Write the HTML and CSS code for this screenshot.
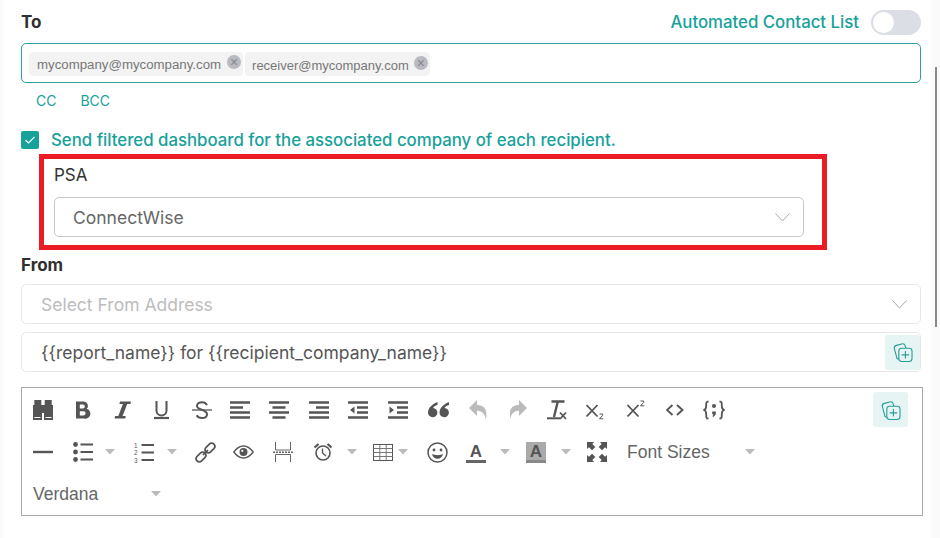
FILE: index.html
```html
<!DOCTYPE html>
<html lang="en">
<head>
<meta charset="utf-8">
<title>Report recipients</title>
<link rel="stylesheet" href="styles.css">
</head>
<body>
<svg class="defs" width="0" height="0" aria-hidden="true">
  <symbol id="copy-plus" viewBox="0 0 20 20">
    <path d="M6.200 16.600 4.600 16 2.200 7.200A2.600 2.600 0 0 1 4 4L8.800 2.700A2.600 2.600 0 0 1 12 4.400L12.600 6.500" fill="none" stroke="currentColor" stroke-width="1"/>
    <rect x="6.200" y="6.600" width="12" height="12" rx="2.600" fill="none" stroke="currentColor" stroke-width="1"/>
    <path d="M12.200 9.200v6.800M8.800 12.600h6.800" fill="none" stroke="currentColor" stroke-width="1"/>
  </symbol>
  <symbol id="caret" viewBox="0 0 10 6"><path d="M0 0h10L5 5.500z" fill="currentColor"/></symbol>
  <symbol id="chevron" viewBox="0 0 15 9"><path d="M.5.500 7.500 8 14.500.500" fill="none" stroke="currentColor" stroke-width="1"/></symbol>
</svg>
<main class="panel">
  <div class="to-head">
    <span class="label-strong">To</span>
    <div class="auto-list"><span>Automated Contact List</span><span class="toggle"><span class="knob"></span></span></div>
  </div>
  <div class="to-box">
    <span class="chip"><span>mycompany@mycompany.com</span><span class="chip-x">×</span></span>
    <span class="chip chip-low"><span>receiver@mycompany.com</span><span class="chip-x">×</span></span>
  </div>
  <div class="cc-row"><span>CC</span><span>BCC</span></div>
  <div class="check-row">
    <span class="checkbox"><svg width="12" height="10" viewBox="0 0 12 10"><path d="M1.500 5.200 4.600 8 10.500 1.800" fill="none" stroke="#fff" stroke-width="1.200"/></svg></span>
    <span>Send filtered dashboard for the associated company of each recipient.</span>
  </div>
  <section class="psa">
    <div class="psa-label">PSA</div>
    <div class="select select-psa"><span>ConnectWise</span><svg class="chev" width="15" height="9"><use href="#chevron"/></svg></div>
  </section>
  <div class="label-strong from-label">From</div>
  <div class="select select-from"><span>Select From Address</span><svg class="chev" width="15" height="9"><use href="#chevron"/></svg></div>
  <div class="subject"><span>{{report_name}} for {{recipient_company_name}}</span><span class="copy-btn"><svg width="22" height="22"><use href="#copy-plus"/></svg></span></div>
  <div class="editor">
    <div class="tb-row tb-first">
      <span class="tb"><svg width="20" height="20" viewBox="0 0 20 20"><path d="M1.300 0h7v5h-7zM11.700 0h7v5h-7zM0 5h9v15H0zM11 5h9v15h-9zM9 5h2v8H9z" fill="#555"/><path d="M1.500 17.500h6M12.500 17.500h6" stroke="#fff" stroke-width="1.200"/></svg></span>
      <span class="tb s1"><svg width="20" height="20" viewBox="0 0 20 20"><path d="M3 1.500h7.500a4.300 4.300 0 0 1 3.200 7.300 4.700 4.700 0 0 1-2.700 9.700H3zM6.800 4.500v4h3a2 2 0 0 0 0-4zM6.800 11.200v4.300h3.700a2.150 2.150 0 0 0 0-4.300z" fill="#555" fill-rule="evenodd"/></svg></span>
      <span class="tb s2"><svg width="20" height="20" viewBox="0 0 20 20"><path d="M6 1.500h11L16.400 4h-3.200L8.600 16h3.200l-.6 2.500H.5l.6-2.500h3.200L8.900 4H5.400z" fill="#555"/></svg></span>
      <span class="tb s3"><svg width="20" height="20" viewBox="0 0 20 20"><path d="M2.500 1v9.500a5 5 0 0 0 10 0V1" fill="none" stroke="#555" stroke-width="2"/><path d="M0 18h15" stroke="#555" stroke-width="2.200"/></svg></span>
      <span class="tb s1"><svg width="20" height="20" viewBox="0 0 20 20"><path d="M15 5C14 3 12 2.200 10 2.200 7.500 2.200 5 3.500 5 6c0 4.200 10 3.400 10 8.200 0 2.500-2.400 3.800-5 3.800-2.200 0-4.300-.8-5.400-2.800" fill="none" stroke="#555" stroke-width="2"/><path d="M0 10h20" stroke="#555" stroke-width="1.300"/></svg></span>
      <span class="tb"><svg width="20" height="20" viewBox="0 0 20 20"><path d="M0 2.500h20M0 7.500h13M0 12.500h20M0 17.500h20" stroke="#555" stroke-width="2.400"/></svg></span>
      <span class="tb"><svg width="20" height="20" viewBox="0 0 20 20"><path d="M0 2.500h20M3.500 7.500h13M0 12.500h20M3.500 17.500h13" stroke="#555" stroke-width="2.400"/></svg></span>
      <span class="tb"><svg width="20" height="20" viewBox="0 0 20 20"><path d="M0 2.500h20M7 7.500h13M0 12.500h20M0 17.500h20" stroke="#555" stroke-width="2.400"/></svg></span>
      <span class="tb"><svg width="20" height="20" viewBox="0 0 20 20"><path d="M0 2.500h20M9 7.500h11M9 12.500h11M0 17.500h20" stroke="#555" stroke-width="2.400"/><path d="M6.500 6.500v7L2 10z" fill="#555"/></svg></span>
      <span class="tb"><svg width="20" height="20" viewBox="0 0 20 20"><path d="M0 2.500h20M9 7.500h11M9 12.500h11M0 17.500h20" stroke="#555" stroke-width="2.400"/><path d="M1.500 6.500v7L6 10z" fill="#555"/></svg></span>
      <span class="tb s1"><svg width="21" height="20" viewBox="0 0 21 20"><path d="M9.500 2C4.500 4 0 7.500 0 12.500a4.700 4.700 0 1 0 5-4.600C5.900 6.500 7.500 5.500 9.500 5zM21 2c-5 2-9.500 5.500-9.500 10.500a4.700 4.700 0 1 0 5-4.600c.9-1.400 2.500-2.400 4.500-2.900z" fill="#555"/></svg></span>
      <span class="tb s3"><svg width="20" height="20" viewBox="0 0 20 20"><path d="M0 8 8 0v5c6 0 11 3 9 14.500C15.500 13 12.500 10.800 8 10.800V16z" fill="#bbb"/></svg></span>
      <span class="tb s4"><svg width="20" height="20" viewBox="0 0 20 20"><path d="M17 8 9 0v5C3 5-2 8 0 19.500 1.500 13 4.500 10.800 9 10.800V16z" fill="#bbb"/></svg></span>
      <span class="tb s2"><svg width="20" height="20" viewBox="0 0 20 20"><path d="M4.500 1.500h13M10.800 1.500 7 17" stroke="#555" stroke-width="2.400" fill="none"/><path d="M0 18.300h13" stroke="#555" stroke-width="2"/><path d="m13 12.500 6 6.500M19 12.500 13 19" stroke="#555" stroke-width="1.800"/></svg></span>
      <span class="tb s2"><svg width="20" height="20" viewBox="0 0 20 20"><path d="m.5 5 11 11.500M11.500 5 .5 16.500" stroke="#555" stroke-width="1.800"/><path d="M13.500 14h3.200l-.1 1.500-3.100 3.300h3.800" fill="none" stroke="#555" stroke-width="1"/></svg></span>
      <span class="tb s3"><svg width="20" height="20" viewBox="0 0 20 20"><path d="m.5 5 11 11.500M11.500 5 .5 16.500" stroke="#555" stroke-width="1.800"/><path d="M13.500 1h3.200l-.1 1.500-3.100 3.300h3.800" fill="none" stroke="#555" stroke-width="1"/></svg></span>
      <span class="tb s3"><svg width="20" height="20" viewBox="0 0 20 20"><path d="M6.500 5 1 10l5.500 5M11 5l5.500 5-5.500 5" fill="none" stroke="#555" stroke-width="1.900"/></svg></span>
      <span class="tb"><svg width="22" height="20" viewBox="0 0 22 20"><path d="M5.500 1.500C3 1.500 3.200 3 3.200 6c0 2.500-.7 3.500-2.200 4 1.500.5 2.200 1.500 2.200 4 0 3-.2 4.500 2.300 4.500M16.500 1.500c2.500 0 2.300 1.500 2.300 4.500 0 2.500.7 3.500 2.200 4-1.500.5-2.200 1.500-2.200 4 0 3 .2 4.500-2.300 4.500" fill="none" stroke="#555" stroke-width="1.800"/><circle cx="11" cy="6" r="2" fill="#555"/><path d="M9.200 11.500h3.600v2.800L10.500 17l-1-.5.900-2.200H9.200z" fill="#555"/></svg></span>
      <span class="copy-btn copy-btn-editor"><svg width="22" height="22"><use href="#copy-plus"/></svg></span>
    </div>
    <div class="tb-row tb-second">
      <span class="tb w40"><svg width="20" height="20" viewBox="0 0 20 20"><path d="M0 10h20" stroke="#555" stroke-width="2.400"/></svg></span>
      <span class="tb w32"><svg width="20" height="20" viewBox="0 0 20 20"><circle cx="2.500" cy="2.500" r="2.400" fill="#555"/><circle cx="2.500" cy="10" r="2.400" fill="#555"/><circle cx="2.500" cy="17.500" r="2.400" fill="#555"/><path d="M7.500 2.500H20M7.500 10H20M7.500 17.500H20" stroke="#555" stroke-width="2.200"/></svg></span>
      <span class="tb-caret w29"><svg width="10" height="6"><use href="#caret"/></svg></span>
      <span class="tb w33"><svg width="20" height="23" viewBox="0 -1.500 20 23"><text x="0" y="5.500" class="num">1</text><text x="0" y="12.800" class="num">2</text><text x="0" y="20.100" class="num">3</text><path d="M7.500 2.500H20M7.500 10H20M7.500 17.500H20" stroke="#555" stroke-width="2.200"/></svg></span>
      <span class="tb-caret w28"><svg width="10" height="6"><use href="#caret"/></svg></span>
      <span class="tb w38"><svg width="21" height="21" viewBox="0 0 21 21"><g fill="none" stroke="#555" stroke-width="1.700"><rect x="-5.500" y="-3.200" width="11" height="6.400" rx="3.200" transform="translate(6 15) rotate(-45)"/><rect x="-5.500" y="-3.200" width="11" height="6.400" rx="3.200" transform="translate(15 6) rotate(-45)"/></g><path d="m8 13 5-5" stroke="#555" stroke-width="1.700"/></svg></span>
      <span class="tb w40"><svg width="21" height="14" viewBox="0 0 21 14"><path d="M.8 7c3-4 6-6 9.700-6s6.700 2 9.700 6c-3 4-6 6-9.700 6S3.800 11 .8 7z" fill="none" stroke="#555" stroke-width="1.300"/><circle cx="10.500" cy="7" r="4" fill="#555"/><circle cx="9.300" cy="5.800" r="1.100" fill="#fff"/></svg></span>
      <span class="tb w40"><svg width="20" height="20" viewBox="0 0 20 20"><path d="M2.500 0v8h15V0M2.500 20v-7.500h15V20" fill="none" stroke="#666" stroke-width="1"/><path d="M0 10.300h20" stroke="#666" stroke-width="1.500" stroke-dasharray="2 1"/></svg></span>
      <span class="tb w34"><svg width="20" height="20" viewBox="0 0 20 20"><circle cx="10" cy="11" r="7" fill="none" stroke="#555" stroke-width="1.600"/><path d="M9.500 6.500V11l3.500 3" fill="none" stroke="#555" stroke-width="1.400"/><path d="m1.500 5.500 4-3.500M18.500 5.500l-4-3.500" stroke="#555" stroke-width="2.200"/></svg></span>
      <span class="tb-caret w26"><svg width="10" height="6"><use href="#caret"/></svg></span>
      <span class="tb w25"><svg width="20" height="17" viewBox="0 0 20 17"><rect x=".5" y=".5" width="19" height="16" fill="none" stroke="#555"/><path d="M.5 4.500h19M.5 8.500h19M.5 12.500h19M6.800.5v16M13.200.5v16" stroke="#777" stroke-width="1"/></svg></span>
      <span class="tb-caret w29"><svg width="10" height="6"><use href="#caret"/></svg></span>
      <span class="tb w39"><svg width="21" height="21" viewBox="0 0 21 21"><circle cx="10.500" cy="10.500" r="9.500" fill="none" stroke="#555" stroke-width="1.500"/><circle cx="7" cy="8" r="1.400" fill="#555"/><circle cx="14" cy="8" r="1.400" fill="#555"/><path d="M4.800 12c1 3 3 4.800 5.700 4.800s4.700-1.800 5.700-4.800c-3 1.500-8.400 1.500-11.400 0z" fill="#555"/></svg></span>
      <span class="tb w34"><span class="color-a">A</span></span>
      <span class="tb-caret w26"><svg width="10" height="6"><use href="#caret"/></svg></span>
      <span class="tb w35"><span class="color-a color-a-bg">A</span></span>
      <span class="tb-caret w26"><svg width="10" height="6"><use href="#caret"/></svg></span>
      <span class="tb w40"><svg width="20" height="20" viewBox="0 0 20 20"><path d="M0 0h7L5.300 2l3 3-3.300 3.300-3-3L0 7zM20 0v7l-2-1.700-3 3L11.700 5l3-3L13 0zM0 20v-7l2 1.700 3-3L8.300 15l-3 3L7 20zM20 20h-7l1.700-2-3-3 3.300-3.300 3 3 2-1.700z" fill="#555"/></svg></span>
      <span class="tb-drop"><span>Font Sizes</span><svg width="10" height="6"><use href="#caret"/></svg></span>
    </div>
    <div class="tb-row tb-third">
      <span class="tb-drop"><span>Verdana</span><svg width="10" height="6"><use href="#caret"/></svg></span>
    </div>
  </div>
</main>
<div class="scroll-thumb"></div>
</body>
</html>
```
FILE: styles.css
```css
* { box-sizing: border-box; }
html, body { margin: 0; height: 100%; overflow: hidden; }
body { background: #fafafa; font-family: Inter, "Liberation Sans", sans-serif; color: #333; position: relative; }
.defs { position: absolute; }
.panel { margin-left: 3px; height: 538px; width: 928px; background: #fff; padding: 11px 7px 0 18px; }
.to-head { display: flex; justify-content: space-between; align-items: center; height: 22px; margin-bottom: 10px; padding-right: 3px; }
.label-strong { font-size: 17px; font-weight: 700; color: #2f2f2f; line-height: 22px; }
.auto-list { display: flex; align-items: center; gap: 12px; font-size: 16.800px; font-weight: 500; color: #17a19b; }
.toggle { width: 50px; height: 25px; border-radius: 13px; background: #dcdee5; padding: 2px; display: block; }
.knob { display: block; width: 21px; height: 21px; border-radius: 50%; background: #fff; }
.to-box { height: 40px; width: 900px; border: 1px solid #2f9ea0; border-radius: 5px; padding: 8px 7px; display: flex; gap: 2px; align-items: flex-start; }
.chip { display: flex; align-items: center; height: 24px; border-radius: 4px; background: #f3f3f3; font-family: "Liberation Sans", sans-serif; font-size: 13.250px; color: #777; padding: 0 2px 0 8px; gap: 6px; }
.chip-low { font-size: 13px; padding-left: 7px; gap: 5px; padding-top: 2px; }
.chip-x { width: 14px; height: 14px; border-radius: 50%; background: #b9bac2; color: #888; display: flex; align-items: center; justify-content: center; font-size: 14px; line-height: 1; margin-top: -4px; }
.cc-row { display: flex; gap: 24px; padding: 9px 0 0 15px; font-size: 14px; color: #17a19b; line-height: 18px; height: 37px; }
.check-row { display: flex; align-items: center; gap: 12px; font-size: 16.800px; font-weight: 500; color: #17a19b; height: 22px; margin-top: 9px; }
.checkbox { width: 18px; height: 18px; border-radius: 2px; background: #17a19b; display: flex; align-items: center; justify-content: center; }
.psa { width: 788px; height: 96px; margin: 3px 0 0 18px; border: 5px solid #ec1c24; padding: 5px 0 0 10px; }
.psa-label { font-size: 17px; color: #333; line-height: 22px; height: 22px; margin-bottom: 11px; }
.select { display: flex; align-items: center; justify-content: space-between; border-radius: 5px; font-size: 17.500px; }
.select-psa { width: 750px; height: 40px; border: 1px solid #c8c8c8; padding: 0 13px 0 18px; color: #666; }
.chev { color: #aaa; }
.from-label { margin-top: 4px; height: 22px; }
.select-from { width: 900px; height: 40px; margin-top: 8px; border: 1px solid #e6e6e6; padding: 0 13px 0 19px; color: #bcbcbc; }
.subject { width: 900px; height: 40px; margin-top: 8px; border: 1px solid #e6e6e6; border-radius: 5px; padding: 0 0 0 19px; display: flex; align-items: center; justify-content: space-between; font-size: 17.500px; color: #555; }
.copy-btn { width: 35px; height: 35px; background: #e6f4f3; border-radius: 3px; color: #2a9d98; display: flex; align-items: center; justify-content: center; flex: none; }
.editor { width: 902px; height: 129px; margin-top: 15px; border: 1px solid #aaa; }
.tb-row { display: flex; align-items: center; padding-left: 11px; }
.tb-first { height: 44px; }
.tb-second { height: 40px; }
.tb-third { height: 44px; }
.tb { width: 39.400px; flex: none; display: flex; align-items: center; height: 24px; }
.s1 { padding-left: 1px; }
.s2 { padding-left: 2px; }
.s3 { padding-left: 3px; }
.s4 { padding-left: 4px; }
.tb-caret { display: flex; align-items: center; color: #bbb; flex: none; }
.copy-btn-editor { margin-left: auto; margin-right: 14px; margin-top: -1px; }
.w25 { width: 25px; }
.w26 { width: 26px; }
.w28 { width: 28px; }
.w29 { width: 29px; }
.w32 { width: 32px; }
.w33 { width: 33px; }
.w34 { width: 34px; }
.w35 { width: 35px; }
.w38 { width: 38px; }
.w39 { width: 39px; }
.w40 { width: 40px; }
.num { font-family: "Liberation Sans", sans-serif; font-size: 6.300px; fill: #555; }
.color-a { display: block; width: 20px; height: 21px; border-bottom: 3px solid #666; font-family: "Liberation Sans", sans-serif; font-weight: 700; font-size: 17px; line-height: 19px; text-align: center; color: #555; }
.color-a-bg { background: #aaa; border-bottom-color: #888; }
.tb-drop { width: 128px; display: flex; align-items: center; justify-content: space-between; font-family: "Liberation Sans", sans-serif; font-size: 17.500px; color: #666; flex: none; }
.tb-drop svg { color: #bbb; }
.scroll-thumb { position: absolute; left: 935px; top: 67px; width: 2px; height: 260px; background: #888; }
```
